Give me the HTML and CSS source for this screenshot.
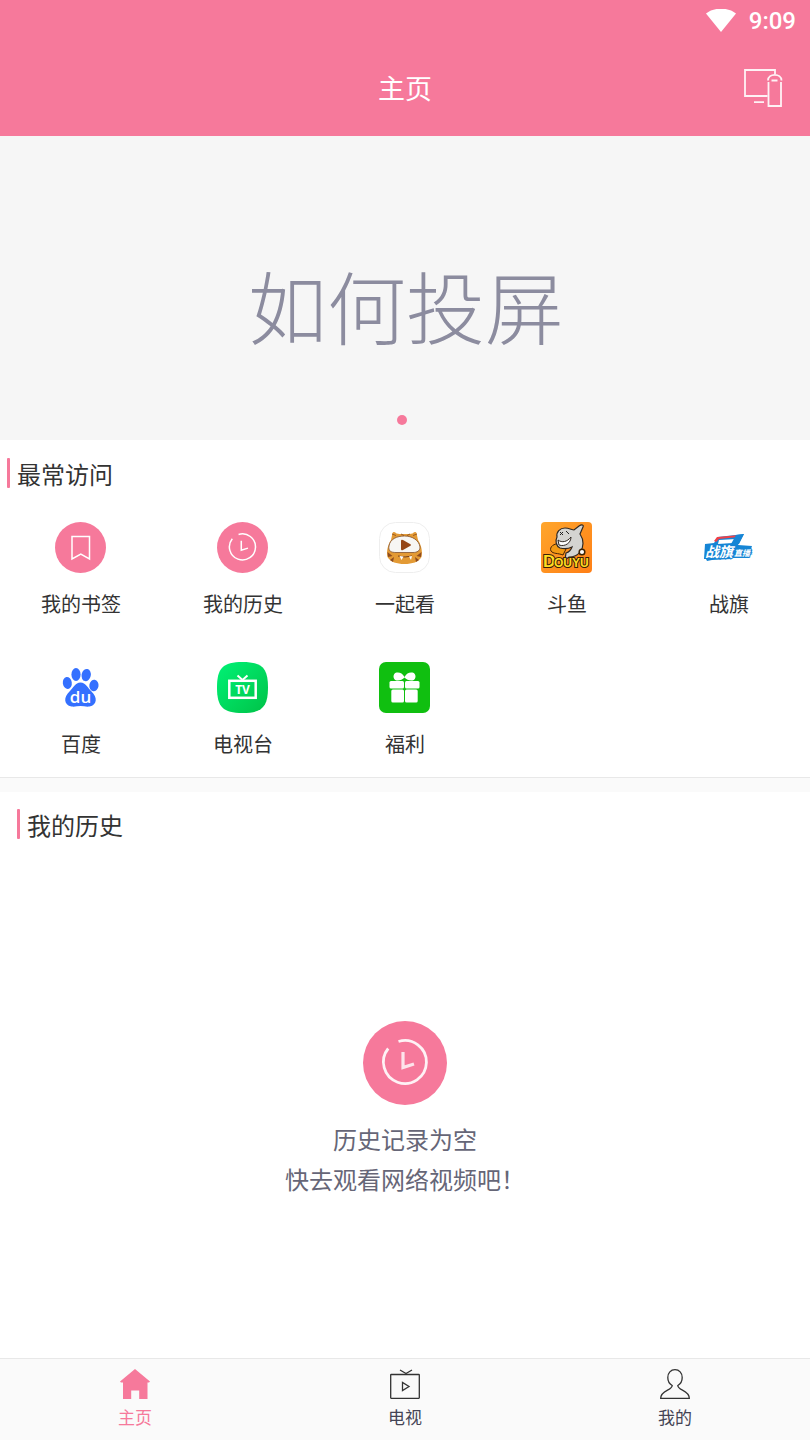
FILE: index.html
```
<!DOCTYPE html>
<html lang="zh-CN">
<head>
    <meta charset="UTF-8">
    <meta name="viewport" content="width=device-width, initial-scale=1.0">
    <title>主页</title>
    <link rel="stylesheet" href="styles.css">
</head>
<body>
    <header class="header">
        <div class="status">
            <svg width="30" height="24" viewBox="0 0 30 24" fill="#fff"><path d="M15 23L0 4.500C8-2 22-2 30 4.500z"/></svg>
            <span>9:09</span>
        </div>
        <div class="titlebar">
            <h1>主页</h1>
            <button class="cast" aria-label="投屏">
                <svg width="40" height="40" viewBox="0 0 40 40" fill="none" stroke="#fff" stroke-opacity=".9" stroke-width="1.8">
                    <path d="M24.500 28H2V2h30v4M11 34.200h10"/>
                    <path d="M25.500 14v24h12.500V14M25 12.500c0-7.500 13.500-7.500 13.500 0M28.500 12.500h6"/>
                </svg>
            </button>
        </div>
    </header>

    <!-- 轮播 -->
    <section class="banner">
        <a href="#help" class="banner-text">如何投屏</a>
        <button class="dot" aria-label="第1页"></button>
    </section>

    <!-- 最常访问 -->
    <section class="frequent">
        <h2>最常访问</h2>
        <nav class="grid">
            <a href="#bookmarks" class="site">
                <svg class="icon" viewBox="0 0 51 51">
                    <circle cx="25.5" cy="25.500" r="25.500" fill="#f6799b"/>
                    <path d="M17 14.500h17.500V37l-8.700-4.800L17 37z" fill="none" stroke="#fff" stroke-width="1.5"/>
                </svg>
                <span>我的书签</span>
            </a>
            <a href="#history" class="site">
                <svg class="icon" viewBox="0 0 84 84">
                    <circle cx="42" cy="42" r="42" fill="#f6799b"/>
                    <path d="M35.500 20.500A21.500 21.500 0 1 1 25.200 27.500" fill="none" stroke="#fff" stroke-width="2.500"/>
                    <path d="M40 31v15.500l11-3.500" fill="none" stroke="#fff" stroke-width="2.500"/>
                </svg>
                <span>我的历史</span>
            </a>
            <a href="#yiqikan" class="site">
                <svg class="icon" viewBox="0 0 51 51">
                    <rect x=".5" y=".5" width="50" height="50" rx="16" fill="#fff" stroke="#eee"/>
                    <path d="M12 18l1.500-7q1-2 4 .5l3 .5h10l3-.5q3-2.500 4-.5L39 18c4 6 4.500 13 3.500 17-3 5-9 7-17 7s-14-2-17-7c-1-4-.5-11 3.500-17z" fill="#e39a35"/>
                    <path d="M13 12l4 1.500M38 12l-4 1.500M22 12l3 1.500M31 12l-3 1.500" stroke="#9b5a22"/>
                    <path d="M8.500 30l5 4-4.500 1zM42.500 30l-5 4 4.500 1zM11 38l4-3-1 5zM40 38l-4-3 1 5z" fill="#8d4b20"/>
                    <path d="M10 24c1-7 8-10 15.500-10S40 18 41 25c0 4-3 5.500-7 5.500H17c-5 0-8-1.500-7-6.500z" fill="#f7f6f4" stroke="#81502c" stroke-width=".8"/>
                    <path d="M22 19q0-2 2-1l7 4q2 1 0 2l-7 4q-2 1-2-1z" fill="#954516"/>
                    <path d="M19 34q7 2 14 0" fill="none" stroke="#784019"/>
                    <path d="M20.500 34l2 4 2-3.500zM30 34.500l2 3.500 1-4z" fill="#fff"/>
                </svg>
                <span>一起看</span>
            </a>
            <a href="#douyu" class="site">
                <svg class="icon" viewBox="0 0 51 51">
                    <defs>
                        <linearGradient id="douyuBg" x1="0" y1="0" x2="1" y2="1">
                            <stop offset="0" stop-color="#ffa62c"/>
                            <stop offset="1" stop-color="#ff7f16"/>
                        </linearGradient>
                    </defs>
                    <rect width="51" height="51" rx="4" fill="url(#douyuBg)"/>
                    <path d="M19 22c-6-1-11 3-9 7 2 3 7 2 12 4l4-8z" fill="#f39a13" stroke="#472306"/>
                    <path d="M16 15c-1-5 3-9 8-9 4 0 7 2 9 2l5-4c3-2 5-1 4 1l-3 7c4 6 4 13 0 18-3 4-7 5-11 5l-4 3 1-7c3-1 5-3 6-6-4 2-8 2-12 1-4-2-5-7-3-11z" fill="#d4d4d1" stroke="#302822" stroke-width="1.200"/>
                    <path d="M17 18c4 3 9 2 13-3 0 6-6 10-12 8z" fill="#fff" stroke="#302822"/>
                    <path d="M19 10l3 3m0-3l-3 3M25 9l3 3" stroke="#222"/>
                    <circle cx="41" cy="30" r="2.800" fill="#fff" stroke="#3b2205" stroke-width="1.500"/>
                    <g class="logo-text">
                        <text x="2" y="45" font-size="17">D</text>
                        <text x="13" y="45" font-size="12">ouyu</text>
                    </g>
                </svg>
                <span>斗鱼</span>
            </a>
            <a href="#zhanqi" class="site">
                <svg class="icon" viewBox="0 0 51 51">
                    <path d="M2 22l9-1 4-6 26-3-6 11 14 1-1 3h-4l5 1-3 8H29l-1 1-19 1-5 1-1-2H1z" fill="#1685d5"/>
                    <path d="M11 19l3-4 23-2-2 2-19 2-3 3z" fill="#ed4149"/>
                    <path d="M16 18l17-1-3 4-15 1z" fill="#fff"/>
                    <path d="M41 12l-8 1-5 9h8z" fill="#1685d5"/>
                    <g class="zhanqi-text">
                        <text x="2" y="35" font-size="14">战旗</text>
                        <text x="31" y="34" font-size="8">直播</text>
                    </g>
                </svg>
                <span>战旗</span>
            </a>
            <a href="#baidu" class="site">
                <svg class="icon" viewBox="0 0 51 51" fill="#3470ff">
                    <ellipse cx="12.300" cy="21" rx="4.500" ry="6" transform="rotate(-8 12 21)"/>
                    <ellipse cx="21" cy="12.500" rx="4.600" ry="6.400"/>
                    <ellipse cx="31.200" cy="13" rx="4.600" ry="6.200" transform="rotate(12 31 13)"/>
                    <ellipse cx="39" cy="23.500" rx="4.600" ry="5.800" transform="rotate(8 39 23)"/>
                    <path d="M25.500 20.500c5.500 0 7 5.500 11 9 6 5.500 6 13.500-2 15-3 .5-6-.5-9-.5s-6 1-9 .5c-8-1.500-8-9.500-2-15 4-3.500 5.500-9 11-9z"/>
                    <text class="du-text" x="25.500" y="41" font-size="17" text-anchor="middle">du</text>
                </svg>
                <span>百度</span>
            </a>
            <a href="#tvlist" class="site">
                <svg class="icon" viewBox="0 0 51 51">
                    <defs>
                        <linearGradient id="tvGreen" x1="0" y1="0" x2="1" y2="1">
                            <stop offset="0" stop-color="#00f276"/>
                            <stop offset="1" stop-color="#00c247"/>
                        </linearGradient>
                    </defs>
                    <path d="M25.500 0C45 0 51 6 51 25.500S45 51 25.500 51 0 45 0 25.500 6 0 25.500 0z" fill="url(#tvGreen)"/>
                    <rect x="12.300" y="18.800" width="26.400" height="17" fill="none" stroke="#fff" stroke-width="2.500"/>
                    <path d="M20.500 13.500l5 4.500 5-4.500" fill="none" stroke="#fff" stroke-width="2"/>
                    <text class="tv-text" x="25.500" y="32" font-size="12" text-anchor="middle">TV</text>
                </svg>
                <span>电视台</span>
            </a>
            <a href="#welfare" class="site">
                <svg class="icon" viewBox="0 0 51 51">
                    <rect width="51" height="51" rx="7" fill="#10bf10"/>
                    <g fill="#fff">
                        <rect x="10.500" y="19" width="14.500" height="7.500" rx="1.500"/>
                        <rect x="26" y="19" width="14.500" height="7.500" rx="1.500"/>
                        <rect x="12.300" y="27.500" width="12.700" height="13" rx="1.500"/>
                        <rect x="26" y="27.500" width="12.700" height="13" rx="1.500"/>
                        <path d="M25.500 15c-2-4-5-5-8-4.500-4 1-4 7 0 8 3 .5 6-1 8-3 2 2 5 3.500 8 3 4-1 4-7 0-8-3-.5-6 .5-8 4.500z"/>
                    </g>
                </svg>
                <span>福利</span>
            </a>
        </nav>
    </section>

    <!-- 我的历史 -->
    <main class="history">
        <h2>我的历史</h2>
        <div class="empty">
            <svg width="84" height="84" viewBox="0 0 84 84">
                <circle cx="42" cy="42" r="42" fill="#f6799b"/>
                <path d="M35.500 20.500A21.500 21.500 0 1 1 25.200 27.500" fill="none" stroke="#fff" stroke-opacity=".9" stroke-width="2.800"/>
                <path d="M40 31v15.500l11-3.500" fill="none" stroke="#fff" stroke-opacity=".8" stroke-width="3.200"/>
            </svg>
            <p>历史记录为空<br>快去观看网络视频吧！</p>
        </div>
    </main>

    <nav class="tabs">
        <a href="#home" class="tab active">
            <svg width="30" height="30" viewBox="0 0 30 30"><path d="M15 0l15 12.500-1 1h-1.500V30h-8.300v-8.500h-8V30H3V13.500H1l-1-1z" fill="#f6799b"/></svg>
            <span>主页</span>
        </a>
        <a href="#tv" class="tab">
            <svg width="30" height="30" viewBox="0 0 30 30" fill="none" stroke="#333" stroke-width="1.300">
                <rect x=".7" y="5.500" width="28.600" height="23.800" rx=".5"/>
                <path d="M10 1l6 3.500L22 1M12.500 13.500v8l6.500-4z"/>
            </svg>
            <span>电视</span>
        </a>
        <a href="#me" class="tab">
            <svg width="30" height="30" viewBox="0 0 30 30" fill="none" stroke="#333" stroke-width="1.300">
                <path d="M12.200 16.500C9.500 15 7.800 12 7.800 8.500c0-4.500 3-7.800 7.200-7.800s7.200 3.300 7.200 7.800c0 3.500-1.700 6.500-4.400 8 0 5 11.500 4.500 11.500 12.800H.7c0-8.300 11.500-7.800 11.500-12.800z"/>
            </svg>
            <span>我的</span>
        </a>
    </nav>
</body>
</html>
```
FILE: styles.css
```
* {
    box-sizing: border-box;
}
body {
    margin: 0;
    min-height: 100vh;
    display: flex;
    flex-direction: column;
    background-color: #fff;
    color: #333;
    font-family: "Noto Sans CJK SC", sans-serif;
}
h1, h2, p {
    margin: 0;
    font-weight: normal;
}
a {
    color: inherit;
    text-decoration: none;
}
button {
    padding: 0;
    border: none;
    background: none;
    cursor: pointer;
}
svg {
    display: block;
}
.header {
    background-color: #f6799b;
    color: #fff;
}
.status {
    display: flex;
    justify-content: flex-end;
    align-items: center;
    gap: 13px;
    height: 42px;
    padding-right: 14px;
    font: 500 24px/42px Roboto, sans-serif;
}
.titlebar {
    display: grid;
    grid-template-columns: 1fr auto 1fr;
    align-items: center;
    height: 94px;
    padding: 0 27px 2px;
}
.titlebar h1 {
    grid-column: 2;
    font-size: 27px;
    line-height: 40px;
}
.cast {
    justify-self: end;
}
.banner {
    display: flex;
    flex-direction: column;
    align-items: center;
    justify-content: flex-end;
    height: 304px;
    padding: 0 6px 15px 0;
    background-color: #f6f6f6;
}
.banner-text {
    margin-bottom: 50px;
    padding-left: 8px;
    color: #8c8c9f;
    font-size: 79px;
    font-weight: 300;
    line-height: 120px;
}
.dot {
    width: 10px;
    height: 10px;
    border-radius: 50%;
    background-color: #f6799b;
}
h2 {
    display: flex;
    gap: 7px;
    height: 30px;
    font-size: 24px;
    line-height: 32px;
}
h2::before {
    content: "";
    width: 3px;
    border-radius: 1px;
    background-color: #f6799b;
}
.frequent {
    padding: 18px 0;
    border-bottom: 1px solid #e8e8e8;
}
.frequent h2 {
    padding-left: 7px;
}
.grid {
    display: grid;
    grid-template-columns: repeat(5, 1fr);
    row-gap: 43px;
    margin-top: 34px;
}
.site {
    display: flex;
    flex-direction: column;
    align-items: center;
    gap: 16px;
    font-size: 20px;
    line-height: 30px;
}
.icon {
    width: 51px;
    height: 51px;
    margin-right: 1px;
}
.logo-text {
    fill: #ffdc20;
    stroke: #392006;
    stroke-width: 2px;
    paint-order: stroke;
    font-family: "Liberation Sans", sans-serif;
    font-weight: bold;
    text-transform: uppercase;
}
.zhanqi-text {
    fill: #fff;
    stroke: #1685d5;
    stroke-width: 2px;
    paint-order: stroke;
    font-weight: bold;
    font-style: italic;
}
.du-text {
    fill: #fff;
    font-family: "Open Sans", sans-serif;
    font-weight: 600;
}
.tv-text {
    fill: #fff;
    font-family: "Open Sans", sans-serif;
    font-weight: bold;
}
.history {
    flex: 1;
    display: flex;
    flex-direction: column;
    padding-top: 17px;
    border-top: 14px solid #fafafa;
}
.history h2 {
    padding-left: 17px;
}
.empty {
    flex: 1;
    display: flex;
    flex-direction: column;
    align-items: center;
    justify-content: center;
    gap: 14px;
    padding-top: 22px;
    color: #666677;
    font-size: 24px;
    line-height: 40px;
    text-align: center;
}
.tabs {
    display: grid;
    grid-template-columns: repeat(3, 1fr);
    height: 82px;
    border-top: 1px solid #e8e8e8;
    background-color: #fafafa;
}
.tab {
    display: flex;
    flex-direction: column;
    align-items: center;
    gap: 6px;
    padding-top: 10px;
    color: #444455;
    font-size: 17px;
    line-height: 24px;
}
.tab.active {
    color: #f6799b;
}
```
